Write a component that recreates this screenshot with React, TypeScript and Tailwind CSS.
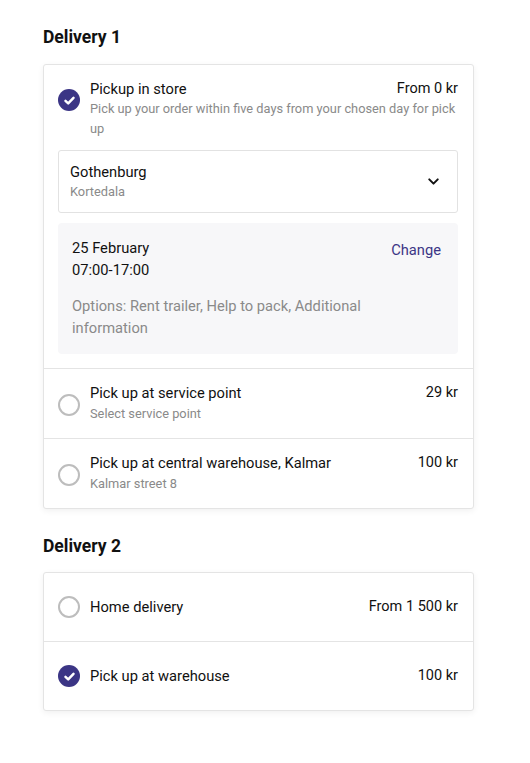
import { ChevronDown } from 'lucide-react';

type Option = {
  title: string;
  subtitle?: string;
  price: string;
  selected?: boolean;
};

function Radio({ checked }: { checked?: boolean }) {
  if (checked) {
    return (
      <span className="flex h-[22px] w-[22px] shrink-0 items-center justify-center rounded-full bg-[#3b3585]">
        <svg width="13" height="13" viewBox="0 0 12 12" fill="none">
          <path
            d="M2.3 6.3 4.8 8.6 9.7 3.5"
            stroke="white"
            strokeWidth="2.3"
            strokeLinecap="round"
            strokeLinejoin="round"
          />
        </svg>
      </span>
    );
  }
  return (
    <span className="block h-[22px] w-[22px] shrink-0 rounded-full border-2 border-[#bdbdbd] bg-white" />
  );
}

function OptionRow({ option, tall }: { option: Option; tall?: boolean }) {
  return (
    <div
      className={
        tall
          ? 'flex h-[68px] items-center gap-[10px] pl-[14px] pr-[15px]'
          : 'flex items-start gap-[10px] pl-[14px] pr-[15px] pt-[14px] pb-[14px]'
      }
    >
      <div className={tall ? '' : 'pt-[11px]'}>
        <Radio checked={option.selected} />
      </div>
      <div className="min-w-0 flex-1">
        <div className="flex items-start justify-between gap-4">
          <p className="text-[14.7px] leading-[20px] text-[#111]">{option.title}</p>
          <p className="shrink-0 text-[14.5px] leading-[20px] text-[#111]">{option.price}</p>
        </div>
        {option.subtitle && (
          <p className="mt-[1px] text-[12.8px] leading-[20px] text-[#8a8a8a]">
            {option.subtitle}
          </p>
        )}
      </div>
    </div>
  );
}

export default function App() {
  const rest: Option[] = [
    { title: 'Pick up at service point', subtitle: 'Select service point', price: '29 kr' },
    {
      title: 'Pick up at central warehouse, Kalmar',
      subtitle: 'Kalmar street 8',
      price: '100 kr',
    },
  ];

  return (
    <div
      className="min-h-screen bg-white px-[43px] pt-[26px] pb-10"
      style={{ fontFamily: 'Roboto, "Liberation Sans", sans-serif' }}
    >
      <div className="w-[431px]">
        <h2 className="text-[17.5px] font-bold leading-[22px] text-[#111]">Delivery 1</h2>
        <div className="mt-[16px] rounded-[3px] border border-[#e4e4e4] bg-white shadow-[0_2px_6px_rgba(0,0,0,0.06)]">
          <div className="pl-[14px] pr-[15px] pt-[14px] pb-[14px]">
            <div className="flex items-start gap-[10px]">
              <div className="pt-[10px]">
                <Radio checked />
              </div>
              <div className="min-w-0 flex-1">
                <div className="flex items-start justify-between gap-4">
                  <p className="text-[14.7px] leading-[20px] text-[#111]">Pickup in store</p>
                  <p className="shrink-0 text-[14.5px] leading-[20px] text-[#111]">From 0 kr</p>
                </div>
                <p className="text-[12.8px] leading-[20px] text-[#8a8a8a]">
                  Pick up your order within five days from your chosen day for pick up
                </p>
              </div>
            </div>

            <div className="mt-[11px] flex h-[63px] items-center justify-between rounded-[3px] border border-[#e2e2e2] px-[11px]">
              <div>
                <p className="text-[14.7px] leading-[20px] text-[#111]">Gothenburg</p>
                <p className="text-[12.8px] leading-[20px] text-[#8a8a8a]">Kortedala</p>
              </div>
              <ChevronDown size={17} strokeWidth={2.8} className="mr-[4px] text-[#111]" />
            </div>

            <div className="mt-[10px] rounded-[4px] bg-[#f7f7f9] px-[14px] pt-[14px] pb-[15px]">
              <div className="flex items-start justify-between">
                <div>
                  <p className="text-[14.7px] leading-[22px] text-[#111]">25 February</p>
                  <p className="text-[14.7px] leading-[22px] text-[#111]">07:00-17:00</p>
                </div>
                <button
                  type="button"
                  className="mt-[2px] mr-[3px] text-[14.7px] leading-[22px] text-[#3b3585]"
                >
                  Change
                </button>
              </div>
              <p className="mt-[14px] w-[330px] text-[14.7px] leading-[22px] text-[#8a8a8a]">
                Options: Rent trailer, Help to pack, Additional information
              </p>
            </div>
          </div>
          {rest.map((o) => (
            <div key={o.title} className="border-t border-[#e4e4e4]">
              <OptionRow option={o} />
            </div>
          ))}
        </div>

        <h2 className="mt-[26px] text-[17.5px] font-bold leading-[22px] text-[#111]">Delivery 2</h2>
        <div className="mt-[15px] rounded-[3px] border border-[#e4e4e4] bg-white shadow-[0_2px_6px_rgba(0,0,0,0.06)]">
          <OptionRow tall option={{ title: 'Home delivery', price: 'From 1 500 kr' }} />
          <div className="border-t border-[#e4e4e4]">
            <OptionRow tall option={{ title: 'Pick up at warehouse', price: '100 kr', selected: true }} />
          </div>
        </div>
      </div>
    </div>
  );
}
